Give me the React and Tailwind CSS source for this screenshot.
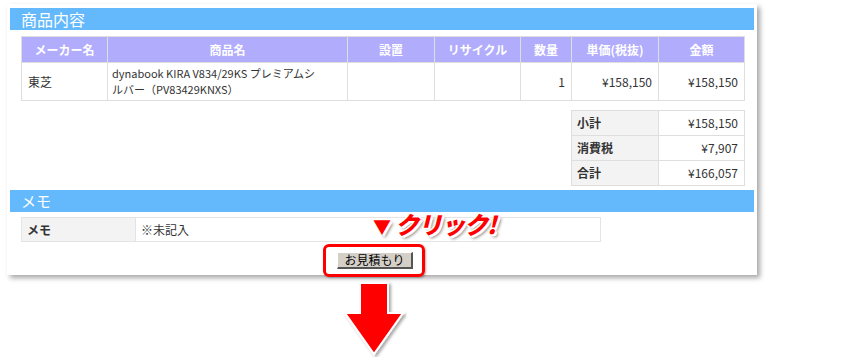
const jp = { fontFamily: '"Noto Sans CJK JP", "Noto Sans", sans-serif' }

const cols = 'grid grid-cols-[85px_239px_86px_85px_50px_86px_85px] gap-px'

const HeadCell = ({ children }) => (
    <div className="bg-[#b1acfb] h-[25px] flex items-center justify-center text-white font-bold text-[12px]">{children}</div>
)

const SectionBar = ({ title, size }) => (
    <div className={`bg-[#64b9fc] h-[22px] flex items-center pl-[11px] text-white ${size}`}>{title}</div>
)

const App = () => {
    return (
        <div className="relative w-[850px] h-[360px] bg-white overflow-hidden text-[#333]" style={jp}>
            {/* Panel */}
            <div className="relative ml-[7px] mt-[4px] w-[750px] h-[271px] bg-white shadow-[3px_3px_5px_rgba(0,0,0,0.35)] px-[3px] pt-[4px]">
                <SectionBar title="商品内容" size="text-[16px]" />

                {/* Items table */}
                <div className="ml-[11px] mt-[6px] w-fit bg-[#dedede] p-px">
                    <div className={cols}>
                        <HeadCell>メーカー名</HeadCell>
                        <HeadCell>商品名</HeadCell>
                        <HeadCell>設置</HeadCell>
                        <HeadCell>リサイクル</HeadCell>
                        <HeadCell>数量</HeadCell>
                        <HeadCell>単価(税抜)</HeadCell>
                        <HeadCell>金額</HeadCell>

                        <div className="bg-white h-[37px] flex items-center pl-[6px] text-[12px]">東芝</div>
                        <div className="bg-white h-[37px] flex flex-col justify-center gap-[1px] pl-[4px] text-[11px] leading-[15px] whitespace-nowrap">
                            <div>dynabook KIRA V834/29KS プレミアムシ</div>
                            <div>ルバー（PV83429KNXS）</div>
                        </div>
                        <div className="bg-white"></div>
                        <div className="bg-white"></div>
                        <div className="bg-white flex items-center justify-end pr-[6px] text-[12px]">1</div>
                        <div className="bg-white flex items-center justify-end pr-[6px] text-[12px]">¥158,150</div>
                        <div className="bg-white flex items-center justify-end pr-[6px] text-[12px]">¥158,150</div>
                    </div>
                </div>

                {/* Totals */}
                <div className="ml-[561px] mt-[9px] w-fit bg-[#dedede] p-px">
                    <div className="grid grid-cols-[86px_85px] gap-px text-[12px]">
                        <div className="bg-[#f3f3f3] h-[24px] flex items-center pl-[5px] font-bold">小計</div>
                        <div className="bg-white flex items-center justify-end pr-[6px]">¥158,150</div>
                        <div className="bg-[#f3f3f3] h-[24px] flex items-center pl-[5px] font-bold">消費税</div>
                        <div className="bg-white flex items-center justify-end pr-[6px]">¥7,907</div>
                        <div className="bg-[#f3f3f3] h-[24px] flex items-center pl-[5px] font-bold">合計</div>
                        <div className="bg-white flex items-center justify-end pr-[6px]">¥166,057</div>
                    </div>
                </div>

                <div className="mt-[4px]">
                    <SectionBar title="メモ" size="text-[15px]" />
                </div>

                {/* Memo table */}
                <div className="ml-[11px] mt-[5px] w-[580px] bg-[#e4e4e4] p-px">
                    <div className="grid grid-cols-[113px_1fr] gap-px text-[12px]">
                        <div className="bg-[#f3f3f3] h-[23px] flex items-center pl-[5px] font-bold">メモ</div>
                        <div className="bg-white flex items-center pl-[5px]">※未記入</div>
                    </div>
                </div>

                {/* Button */}
                <div className="ml-[327px] mt-[10px] relative w-[76px]">
                    <div className="w-[76px] h-[17px] flex items-center justify-center bg-[#d4d0c8] border-t border-l border-t-white border-l-white border-b-2 border-r-2 border-b-[#555] border-r-[#555] text-[12px] leading-[12px] text-black">お見積もり</div>
                    <div className="absolute left-[-14px] top-[-8px] w-[102px] h-[33px] border-[3px] border-[#ff0000] rounded-[6px] shadow-[1px_1px_2px_rgba(0,0,0,0.3)]"></div>
                </div>

                {/* Click label */}
                <div className="absolute left-[366px] top-[205px] text-[#ff0000] text-[24px] font-black italic leading-[30px] tracking-[-1px] [text-shadow:-1px_-1px_0_#fff,1px_-1px_0_#fff,-1px_1px_0_#fff,2px_2px_0_#fff,3px_3px_3px_rgba(0,0,0,0.45)]">
                    <span className="text-[18px] not-italic mr-[5px]">▼</span>クリック!
                </div>
            </div>

            {/* Down arrow */}
            <svg className="ml-[343px] mt-[6px]" width="64" height="76" viewBox="0 0 64 76">
                <defs>
                    <filter id="sh" x="-20%" y="-20%" width="150%" height="150%">
                        <feDropShadow dx="2" dy="2" stdDeviation="1.5" floodColor="#000" floodOpacity="0.35" />
                    </filter>
                </defs>
                <polygon points="17,2 45,2 45,32 60,32 31,73 2,32 17,32" fill="#ff0000" stroke="#fff" strokeWidth="2" strokeLinejoin="miter" filter="url(#sh)" />
            </svg>
        </div>
    )
}

export default App
